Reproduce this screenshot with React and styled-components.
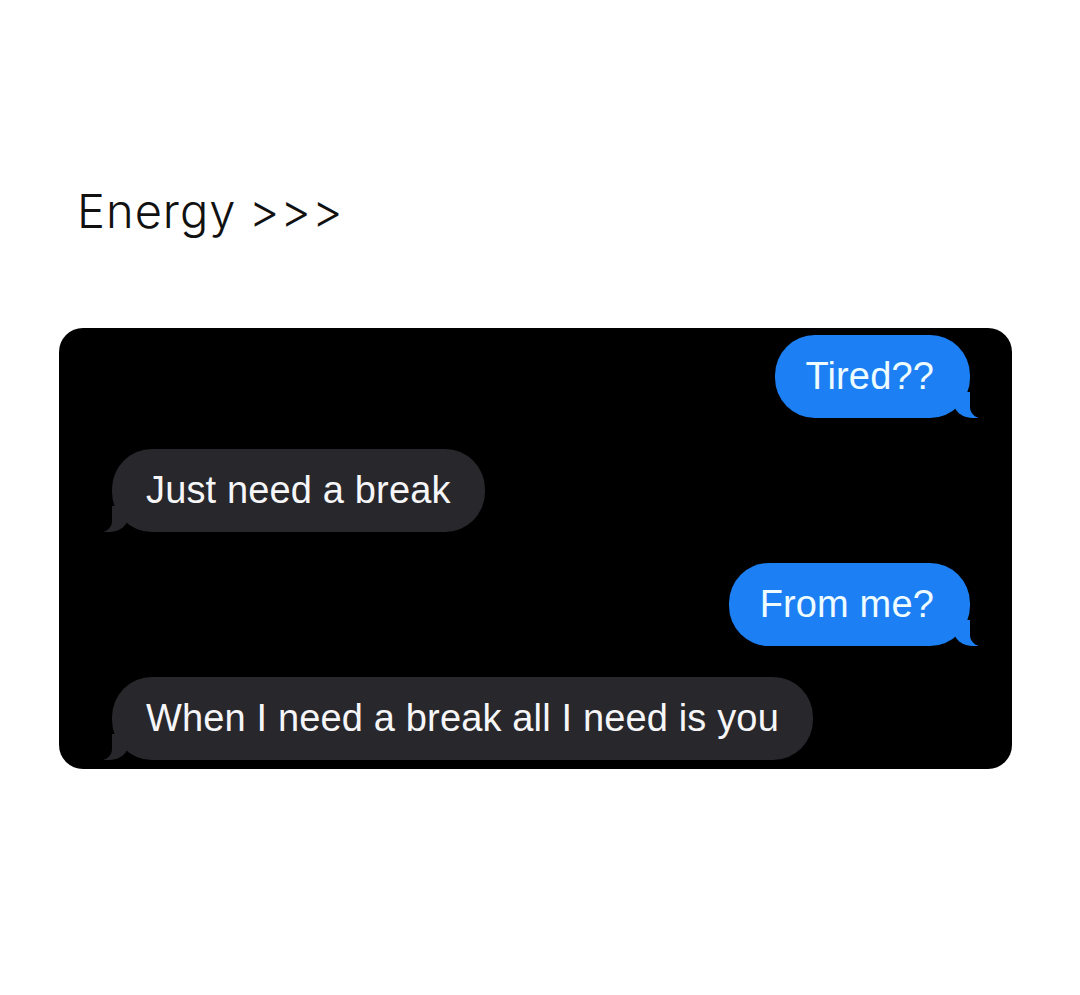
import React from "react";
import styled, { createGlobalStyle } from "styled-components";

const GlobalStyle = createGlobalStyle`
  html, body {
    margin: 0;
    padding: 0;
    background: #ffffff;
  }
  body {
    font-family: "Liberation Sans", Arial, sans-serif;
  }
`;

const Page = styled.div`
  width: 1080px;
  height: 995px;
  box-sizing: border-box;
  padding: 187px 68px 0 59px;
  background: #fff;
`;

const Title = styled.h1`
  margin: 0 0 94px 18px;
  font-family: Inter, Roboto, "Liberation Sans", sans-serif;
  font-weight: 300;
  font-size: 47px;
  line-height: 1;
  color: #111;
  letter-spacing: 1px;
  word-spacing: -2px;
`;

const Chat = styled.div`
  display: flex;
  flex-direction: column;
  gap: 31px;
  background: #000;
  border-radius: 24px;
  padding: 7px 42px 7px 53px;
  height: 441px;
  box-sizing: border-box;
`;

const Bubble = styled.div`
  position: relative;
  align-self: ${(p) => (p.$mine ? "flex-end" : "flex-start")};
  height: 83px;
  display: flex;
  align-items: center;
  box-sizing: border-box;
  padding: ${(p) => (p.$mine ? "0 36px 0 31px" : "0 34px 0 34px")};
  border-radius: 40px;
  background: ${(p) => (p.$mine ? "#1c80f4" : "#28272c")};
  color: ${(p) => (p.$mine ? "#eefbff" : "#f6f6f8")};
  font-size: 38px;
  letter-spacing: 0.15px;
  white-space: nowrap;

  &::before {
    content: "";
    position: absolute;
    bottom: 0;
    ${(p) => (p.$mine ? "right: -8px;" : "left: -8px;")}
    width: 24px;
    height: 26px;
    background: ${(p) => (p.$mine ? "#1c80f4" : "#28272c")};
    ${(p) =>
      p.$mine
        ? "border-bottom-left-radius: 18px 15px;"
        : "border-bottom-right-radius: 18px 15px;"}
  }

  &::after {
    content: "";
    position: absolute;
    bottom: 0;
    ${(p) => (p.$mine ? "right: -26px;" : "left: -26px;")}
    width: 26px;
    height: 26px;
    background: #000;
    ${(p) =>
      p.$mine
        ? "border-bottom-left-radius: 11px;"
        : "border-bottom-right-radius: 11px;"}
  }
`;

const messages = [
  { text: "Tired??", mine: true },
  { text: "Just need a break", mine: false },
  { text: "From me?", mine: true },
  { text: "When I need a break all I need is you", mine: false },
];

export default function App() {
  return (
    <>
      <GlobalStyle />
      <Page>
        <Title>Energy &gt;&gt;&gt;</Title>
        <Chat>
          {messages.map((m, i) => (
            <Bubble key={i} $mine={m.mine}>
              {m.text}
            </Bubble>
          ))}
        </Chat>
      </Page>
    </>
  );
}
